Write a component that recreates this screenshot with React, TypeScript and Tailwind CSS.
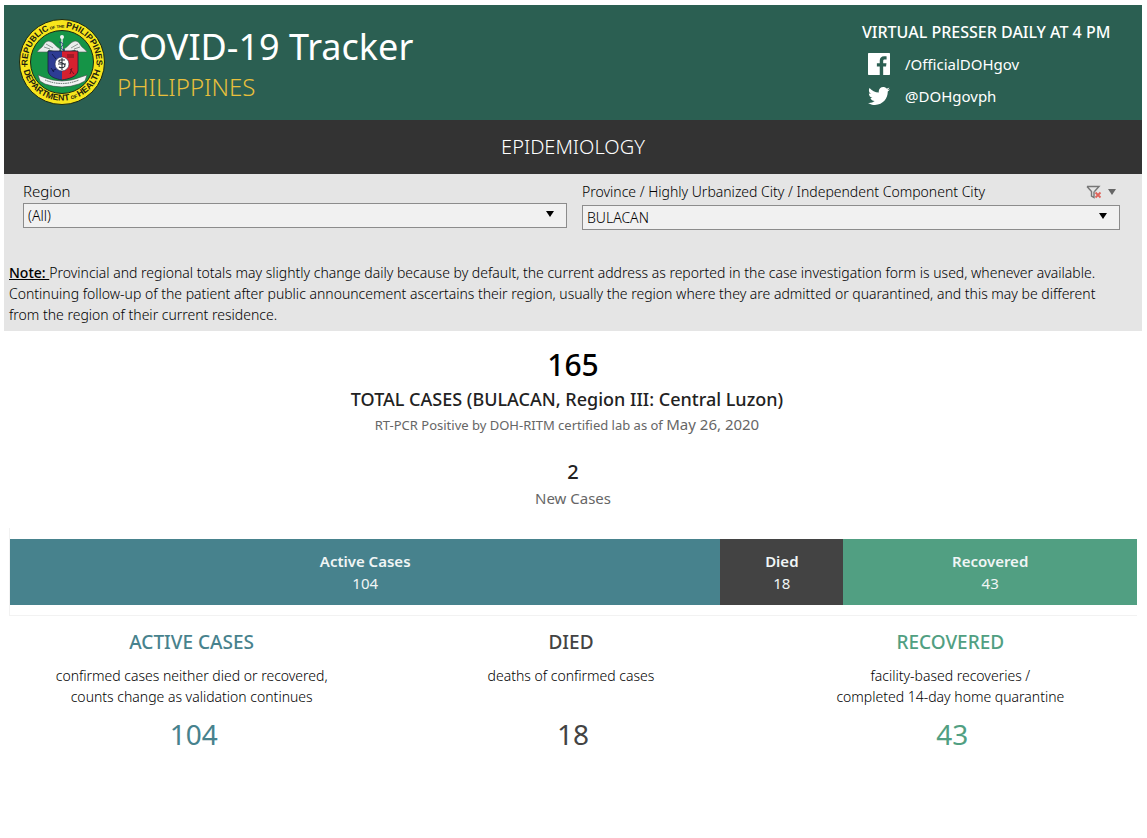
import React from 'react';
import { FaTwitter } from 'react-icons/fa';

interface Outcome {
  label: string;
  description: string[];
  count: number;
  barClass: string;
  textClass: string;
}

const outcomes: Outcome[] = [
  {
    label: 'Active Cases',
    description: ['confirmed cases neither died or recovered,', 'counts change as validation continues'],
    count: 104,
    barClass: 'bg-[#47828d]',
    textClass: 'text-[#47828d]',
  },
  {
    label: 'Died',
    description: ['deaths of confirmed cases'],
    count: 18,
    barClass: 'bg-[#434343]',
    textClass: 'text-[#434343]',
  },
  {
    label: 'Recovered',
    description: ['facility-based recoveries /', 'completed 14-day home quarantine'],
    count: 43,
    barClass: 'bg-[#519f82]',
    textClass: 'text-[#519f82]',
  },
];

const DohSeal: React.FC = () => (
  <svg viewBox="0 0 88 88" className="size-[88px] shrink-0" role="img" aria-label="Department of Health seal">
    <defs>
      <path id="seal-top" d="M10.5 52 A34.4 34.4 0 1 1 77.5 52" />
      <path id="seal-bottom" d="M4.6 47 A39.6 39.6 0 0 0 83.4 47" />
    </defs>
    <circle cx="44" cy="44" r="42.5" fill="#f7e51c" stroke="#1c2a12" strokeWidth="1" />
    <circle cx="44" cy="44" r="31.5" fill="#159447" stroke="#1c2a12" strokeWidth="1" />
    <g fontFamily="Liberation Sans, sans-serif" fontWeight="700" fill="#1d1d10" textAnchor="middle">
      <text fontSize="8.6">
        <textPath href="#seal-top" startOffset="50%">
          REPUBLIC<tspan fontSize="4"> OF THE </tspan>PHILIPPINES
        </textPath>
      </text>
      <text fontSize="8.8">
        <textPath href="#seal-bottom" startOffset="50%">
          DEPARTMENT<tspan fontSize="5"> OF </tspan>HEALTH
        </textPath>
      </text>
    </g>
    <circle cx="6.8" cy="48" r="0.8" fill="#1d1d10" />
    <circle cx="81.2" cy="48" r="0.8" fill="#1d1d10" />
    {/* wings */}
    <g fill="#e9eeec" stroke="#4c5a54" strokeWidth="0.6">
      <path d="M42 31 C37 28 36 24 31 23 C27 23 26 27 24 29 C22 31 20 32 19 34 L30 34 L31 32 L41 35 Z" />
      <path d="M46 31 C51 28 52 24 57 23 C61 23 62 27 64 29 C66 31 68 32 69 34 L58 34 L57 32 L47 35 Z" />
      <path d="M26 29 L32 31 M28 26 L35 30 M62 29 L56 31 M60 26 L53 30" fill="none" />
    </g>
    <path d="M44 19 V34" stroke="#d8dfdc" strokeWidth="1.6" />
    <circle cx="44" cy="19" r="2" fill="#f1f3f2" />
    <path d="M41 24 Q47 25 44 28 Q41 31 47 32" fill="none" stroke="#2b3d7b" strokeWidth="1" />
    {/* shield */}
    <path d="M30 33 H44 V62 C38 61 31 59 30 53 Z" fill="#2d3c94" />
    <path d="M44 33 H60 V53 C59 59 50 61 44 62 Z" fill="#d6202f" />
    <path d="M30 33 H60 V53 C59 59 50 61 44 62 C38 61 31 59 30 53 Z" fill="none" stroke="#1b1f3a" strokeWidth="0.8" />
    <path d="M34 36 L38 41 M36 54 L33 50 M34 53 L38 51" stroke="#111a4e" strokeWidth="1" />
    <path d="M49 37 H56 M49 39 H56 M52 51 L56 56 M54 50 L52 56" stroke="#6f1020" strokeWidth="1" />
    <circle cx="44" cy="46" r="7" fill="#fff" stroke="#26304f" strokeWidth="0.6" />
    <path d="M44 40 V52 M47 42 Q40 41 41 44 Q47 45 47 48 Q45 51 41 49 M40 46 H48" fill="none" stroke="#2a2f3a" strokeWidth="1.1" />
    {/* motto ribbon */}
    <path d="M20 57 L25 59 Q44 67 63 59 L69 57 L67 63 L61 66 Q44 72 27 66 L22 63 Z" fill="#f2f4f3" stroke="#3d4a44" strokeWidth="0.6" />
    <path d="M27 62 Q44 69 61 62" fill="none" stroke="#59645f" strokeWidth="1" strokeDasharray="1.5 0.8" />
  </svg>
);

const FacebookIcon: React.FC = () => (
  <svg viewBox="0 0 24 24" className="size-[22px]" fill="currentColor" aria-hidden="true">
    <path d="M23.3 0H.7C.3 0 0 .3 0 .7v22.6c0 .4.3.7.7.7h12.118v-9.294H9.689v-3.621h3.129V8.41c0-3.099 1.894-4.785 4.659-4.785 1.325 0 2.464.097 2.796.141v3.24h-1.921c-1.5 0-1.792.721-1.792 1.771v2.311h3.584l-.465 3.63H16.56V24h6.74c.4 0 .7-.3.7-.7V.7c0-.4-.3-.7-.7-.7" />
  </svg>
);

const Caret: React.FC<{ className?: string }> = ({ className }) => (
  <svg viewBox="0 0 10 6" className={className} fill="currentColor" preserveAspectRatio="none" aria-hidden="true">
    <path d="M0 0h10L5 6z" />
  </svg>
);

const ClearFilterIcon: React.FC = () => (
  <svg viewBox="0 0 16 14" className="h-[14px] w-4" fill="none" aria-hidden="true">
    <path d="M1 1.5h12L8.5 6.5M1 1.5l4.5 5v4.5l2.5 1.5V6.5" stroke="#777" strokeWidth="1.4" />
    <path d="M9.5 7.5l5 5M14.5 7.5l-5 5" stroke="#e0635a" strokeWidth="1.8" />
  </svg>
);

interface FilterSelectProps {
  id: string;
  options: string[];
}

const FilterSelect: React.FC<FilterSelectProps> = ({ id, options }) => (
  <div className="relative">
    <select
      id={id}
      className="block h-[25px] w-full appearance-none border border-[#8c8c8c] bg-[#f1f1f1] px-1 text-sm leading-5 font-light text-black"
    >
      {options.map((option) => (
        <option key={option}>{option}</option>
      ))}
    </select>
    <Caret className="pointer-events-none absolute top-2 right-[13px] h-[6px] w-2 text-black" />
  </div>
);

export default function App() {
  return (
    <div className="bg-white pt-[5px] pr-[5px] pb-4 pl-1 font-['Noto_Sans','Open_Sans',sans-serif] text-black">
      <header className="flex items-start justify-between bg-[#2b5f52] pr-7 pb-2 pl-[14px] text-white">
        <div className="flex items-center gap-[11px] pt-[13px]">
          <DohSeal />
          <div className="pt-1.5">
            <h1 className="text-4xl leading-[44px]">COVID-19 Tracker</h1>
            <p className="text-2xl leading-9 font-light text-[#e8bf3c]">PHILIPPINES</p>
          </div>
        </div>
        <div className="min-w-[252px] pt-4">
          <p className="text-base leading-[22px] font-medium">VIRTUAL PRESSER DAILY AT 4 PM</p>
          <ul className="pt-[5px] pl-[6px] text-[15px]">
            <li>
              <a href="#facebook" className="flex h-8 items-center gap-[15px]">
                <FacebookIcon />
                /OfficialDOHgov
              </a>
            </li>
            <li>
              <a href="#twitter" className="flex h-8 items-center gap-[15px]">
                <FaTwitter className="size-[22px]" aria-hidden="true" />
                @DOHgovph
              </a>
            </li>
          </ul>
        </div>
      </header>

      <h2 className="bg-[#333] text-center text-xl leading-[54px] font-light text-white">EPIDEMIOLOGY</h2>

      <section className="bg-[#e5e5e5] pt-[5px] pb-[6px]">
        <div className="grid grid-cols-[544fr_538fr] items-start gap-x-[15px] pr-[22px] pl-[19px]">
          <div>
            <label htmlFor="region" className="block text-[15px] leading-6 font-light">Region</label>
            <FilterSelect id="region" options={['(All)']} />
          </div>
          <div>
            <div className="flex h-[26px] items-center justify-between">
              <label htmlFor="province" className="text-sm font-light">
                Province / Highly Urbanized City / Independent Component City
              </label>
              <div className="flex items-center gap-1.5 pr-1">
                <button type="button" aria-label="Clear filter">
                  <ClearFilterIcon />
                </button>
                <button type="button" aria-label="Filter menu">
                  <Caret className="h-[6px] w-2 text-[#666]" />
                </button>
              </div>
            </div>
            <FilterSelect id="province" options={['BULACAN']} />
          </div>
        </div>
        <p className="pt-8 pr-4 pl-[5px] text-sm leading-[21px] font-[350]">
          <span className="font-medium underline">Note: </span>
          Provincial and regional totals may slightly change daily because by default, the current address as reported
          in the case investigation form is used, whenever available. Continuing follow-up of the patient after public
          announcement ascertains their region, usually the region where they are admitted or quarantined, and this may
          be different from the region of their current residence.
        </p>
      </section>

      <section className="pt-3 text-center">
        <p className="text-3xl leading-[44px] font-medium">165</p>
        <div className="pr-3">
          <h3 className="text-lg leading-6 font-medium text-[#222]">
            TOTAL CASES (BULACAN, Region III: Central Luzon)
          </h3>
          <p className="text-[13px] leading-[26px] text-[#666]">
            RT-PCR Positive by DOH-RITM certified lab as of <span className="text-[15px]">May 26, 2020</span>
          </p>
        </div>
        <p className="pt-5 text-xl leading-7 font-medium text-[#222]">2</p>
        <p className="text-[15px] leading-6 text-[#666]">New Cases</p>
      </section>

      <section className="mt-[18px] mr-[5px] ml-[5px] flex border-b border-l border-[#f2f2f2] pt-[11px] pb-[10px] text-center text-[15px] leading-[22px] text-[#f0f5f5]">
        {outcomes.map(({ label, count, barClass }) => (
          <div key={label} className={`basis-0 py-[11px] ${barClass}`} style={{ flexGrow: count }}>
            <p className="font-semibold">{label}</p>
            <p>{count}</p>
          </div>
        ))}
      </section>

      <section className="grid grid-cols-3 pt-3 text-center">
        {outcomes.map(({ label, description, count, textClass }) => (
          <div key={label} className="flex flex-col">
            <h3 className={`pr-1 text-[19px] leading-7 font-medium uppercase ${textClass}`}>{label}</h3>
            <p className="pt-[9px] pr-1 text-sm leading-[21px] font-light">
              {description.map((line) => (
                <span key={line} className="block">{line}</span>
              ))}
            </p>
            <p className={`mt-auto pt-2 text-[28px] leading-[38px] ${textClass}`}>{count}</p>
          </div>
        ))}
      </section>
    </div>
  );
}
